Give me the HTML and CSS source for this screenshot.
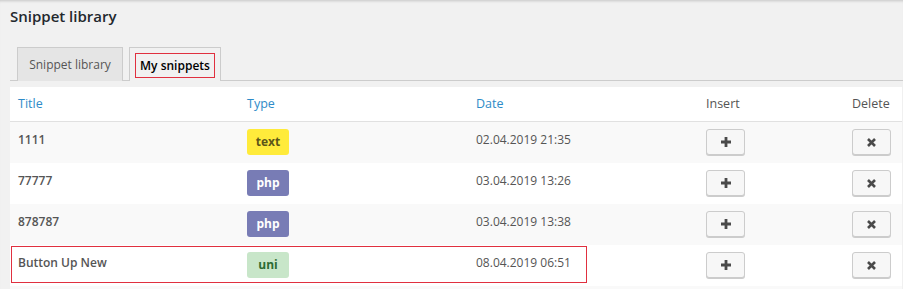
FILE: index.html
```html
<!DOCTYPE html>
<html lang="en">
<head>
<meta charset="utf-8">
<title>Snippet library</title>
<link rel="stylesheet" href="styles.css">
</head>
<body>
<div class="wrap">
  <h1 class="page-title">Snippet library</h1>
  <nav class="tabs">
    <a class="tab">Snippet library</a>
    <a class="tab tab-active"><span class="tab-mark">My snippets</span></a>
  </nav>
  <div class="table">
    <div class="row head">
      <div class="cell link">Title</div>
      <div class="cell link">Type</div>
      <div class="cell link">Date</div>
      <div class="cell">Insert</div>
      <div class="cell">Delete</div>
    </div>
    <div class="row alt">
      <div class="cell name">1111</div>
      <div class="cell"><span class="badge badge-text">text</span></div>
      <div class="cell date">02.04.2019 21:35</div>
      <div class="cell"><button class="btn btn-insert"><svg width="12" height="12" viewBox="0 0 12 12"><path d="M6 1v10M1 6h10" stroke="#4a4a4a" stroke-width="2.8"/></svg></button></div>
      <div class="cell"><button class="btn btn-delete"><svg width="11" height="11" viewBox="0 0 11 11"><path d="M2 2l7 7M9 2l-7 7" stroke="#4a4a4a" stroke-width="2.6"/></svg></button></div>
    </div>
    <div class="row">
      <div class="cell name">77777</div>
      <div class="cell"><span class="badge badge-php">php</span></div>
      <div class="cell date">03.04.2019 13:26</div>
      <div class="cell"><button class="btn btn-insert"><svg width="12" height="12" viewBox="0 0 12 12"><path d="M6 1v10M1 6h10" stroke="#4a4a4a" stroke-width="2.8"/></svg></button></div>
      <div class="cell"><button class="btn btn-delete"><svg width="11" height="11" viewBox="0 0 11 11"><path d="M2 2l7 7M9 2l-7 7" stroke="#4a4a4a" stroke-width="2.6"/></svg></button></div>
    </div>
    <div class="row alt">
      <div class="cell name">878787</div>
      <div class="cell"><span class="badge badge-php">php</span></div>
      <div class="cell date">03.04.2019 13:38</div>
      <div class="cell"><button class="btn btn-insert"><svg width="12" height="12" viewBox="0 0 12 12"><path d="M6 1v10M1 6h10" stroke="#4a4a4a" stroke-width="2.8"/></svg></button></div>
      <div class="cell"><button class="btn btn-delete"><svg width="11" height="11" viewBox="0 0 11 11"><path d="M2 2l7 7M9 2l-7 7" stroke="#4a4a4a" stroke-width="2.6"/></svg></button></div>
    </div>
    <div class="row highlight">
      <div class="cell name">Button Up New</div>
      <div class="cell"><span class="badge badge-uni">uni</span></div>
      <div class="cell date">08.04.2019 06:51</div>
      <div class="cell"><button class="btn btn-insert"><svg width="12" height="12" viewBox="0 0 12 12"><path d="M6 1v10M1 6h10" stroke="#4a4a4a" stroke-width="2.8"/></svg></button></div>
      <div class="cell"><button class="btn btn-delete"><svg width="11" height="11" viewBox="0 0 11 11"><path d="M2 2l7 7M9 2l-7 7" stroke="#4a4a4a" stroke-width="2.6"/></svg></button></div>
    </div>
    <div class="row alt foot"></div>
  </div>
</div>
</body>
</html>
```

FILE: styles.css
```css
html, body {
  margin: 0;
  padding: 0;
  background: #f1f1f1;
}
body {
  font-family: "Open Sans", "Noto Sans", Arial, sans-serif;
  font-size: 12px;
  color: #444;
  box-shadow: inset 0 3px 3px -2px rgba(0,0,0,0.18);
  min-height: 289px;
}
.wrap {
  padding: 0 1px 0 10px;
}
.page-title {
  margin: 0;
  padding-top: 4px;
  font-size: 15px;
  font-weight: 600;
  line-height: 24px;
  color: #23282d;
  height: 43px;
}
.tabs {
  display: flex;
  gap: 6px;
  padding-left: 7px;
  border-bottom: 1px solid #ccc;
  margin-right: -1px;
  height: 33px;
}
.tab {
  box-sizing: border-box;
  display: flex;
  align-items: center;
  justify-content: center;
  white-space: nowrap;
  height: 34px;
  border: 1px solid #ccc;
  border-bottom: none;
  background: #e5e5e5;
  color: #555;
  font-size: 12px;
  font-weight: 400;
  padding: 0 0 1px 0;
  width: 106px;
}
.tab-active {
  background: #f1f1f1;
  color: #000;
  font-weight: 600;
  width: 92px;
  padding: 5px 5px 3px;
  align-items: stretch;
  position: relative;
  z-index: 1;
}
.tab-mark {
  flex: 1;
  display: flex;
  align-items: center;
  justify-content: center;
  border: 1px solid #e0303f;
}
.table {
  margin-top: 6px;
  background: #fff;
}
.row {
  display: grid;
  grid-template-columns: 229px 229px 230px 146px 1fr;
  height: 41px;
  position: relative;
}
.row.alt {
  background: #f9f9f9;
}
.row.head {
  height: 34px;
  border-bottom: 1px solid #e1e1e1;
  background: #fff;
  align-items: center;
}
.row.head .cell {
  padding-top: 0;
  line-height: 20px;
  font-size: 12.5px;
  color: #555;
}
.row.head .cell.link {
  color: #2e8bc8;
}
.cell {
  padding: 8px 0 0 8px;
  line-height: 20px;
  box-sizing: border-box;
}
.row:not(.head) .cell:nth-child(n+2) {
  padding-top: 7px;
}
.row:not(.head) .cell.date {
  padding-top: 8px;
}
.name {
  font-weight: 600;
  color: #555;
}
.date {
  color: #555;
}
.badge {
  display: inline-flex;
  align-items: center;
  justify-content: center;
  width: 42px;
  height: 26px;
  border-radius: 3px;
  font-weight: 700;
  font-size: 12px;
}
.badge-text {
  background: #ffeb3b;
  color: #5c5619;
}
.badge-php {
  background: #787cb5;
  color: #fff;
}
.badge-uni {
  background: #c8e6c9;
  color: #2e6b32;
}
.btn {
  display: flex;
  align-items: center;
  justify-content: center;
  height: 26px;
  padding: 0;
  border: 1px solid #ccc;
  border-radius: 3px;
  background: #f7f7f7;
  box-shadow: 0 1px 0 #ccc;
  box-sizing: border-box;
}
.btn-insert {
  width: 39px;
}
.btn-delete {
  width: 39px;
}
.highlight::after {
  content: "";
  position: absolute;
  left: 1px;
  top: 1px;
  width: 576px;
  height: 37px;
  border: 1px solid #e0303f;
  box-sizing: border-box;
  pointer-events: none;
}
.foot {
  height: 10px;
}
```
